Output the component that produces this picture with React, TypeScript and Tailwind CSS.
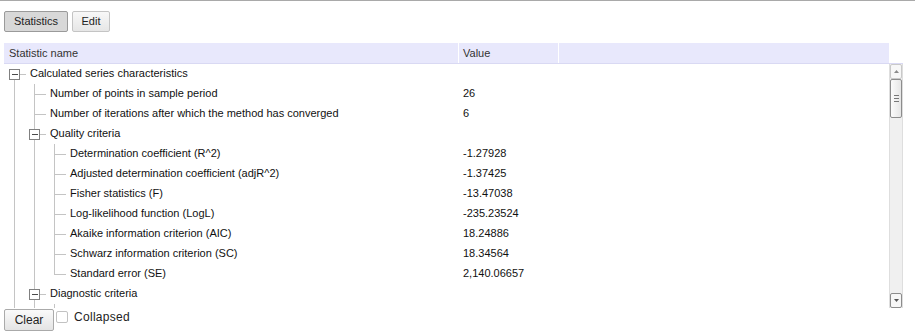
import React from 'react';

type Row = {
  guides: boolean[];
  box: boolean;
  top: boolean;
  bottom: boolean;
  name: string;
  value: string;
};

const rows: Row[] = [
  { guides: [], box: true, top: false, bottom: true, name: 'Calculated series characteristics', value: '' },
  { guides: [true], box: false, top: true, bottom: true, name: 'Number of points in sample period', value: '26' },
  { guides: [true], box: false, top: true, bottom: true, name: 'Number of iterations after which the method has converged', value: '6' },
  { guides: [true], box: true, top: true, bottom: true, name: 'Quality criteria', value: '' },
  { guides: [true, true], box: false, top: true, bottom: true, name: 'Determination coefficient (R^2)', value: '-1.27928' },
  { guides: [true, true], box: false, top: true, bottom: true, name: 'Adjusted determination coefficient (adjR^2)', value: '-1.37425' },
  { guides: [true, true], box: false, top: true, bottom: true, name: 'Fisher statistics (F)', value: '-13.47038' },
  { guides: [true, true], box: false, top: true, bottom: true, name: 'Log-likelihood function (LogL)', value: '-235.23524' },
  { guides: [true, true], box: false, top: true, bottom: true, name: 'Akaike information criterion (AIC)', value: '18.24886' },
  { guides: [true, true], box: false, top: true, bottom: true, name: 'Schwarz information criterion (SC)', value: '18.34564' },
  { guides: [true, true], box: false, top: true, bottom: false, name: 'Standard error (SE)', value: '2,140.06657' },
  { guides: [true], box: true, top: true, bottom: true, name: 'Diagnostic criteria', value: '' },
  // next row is scrolled below the fold: only its tree lines peek out
  { guides: [true, true], box: false, top: true, bottom: true, name: '', value: '' },
];

const LINE = '#c4c4c4';

function Guide({ on }: { on: boolean }) {
  return (
    <svg width="20" height="20" className="shrink-0" shapeRendering="crispEdges">
      {on && <line x1="10.5" y1="0" x2="10.5" y2="20" stroke={LINE} />}
    </svg>
  );
}

function Node({ box, top, bottom }: { box: boolean; top: boolean; bottom: boolean }) {
  return (
    <svg width="22" height="20" className="shrink-0" shapeRendering="crispEdges">
      {top && <line x1="10.5" y1="0" x2="10.5" y2={box ? 5 : 10.5} stroke={LINE} />}
      {bottom && <line x1="10.5" y1={box ? 16 : 10.5} x2="10.5" y2="20" stroke={LINE} />}
      <line x1={box ? 16 : 10.5} y1="10.5" x2="22" y2="10.5" stroke={LINE} />
      {box && (
        <>
          <rect x="5.5" y="5.5" width="10" height="10" fill="#fff" stroke="#808080" />
          <line x1="8" y1="10.5" x2="14" y2="10.5" stroke="#4a4a4a" />
        </>
      )}
    </svg>
  );
}

function Scrollbar() {
  return (
    <div className="flex h-[244px] w-[14px] flex-col bg-[#f0f0f0] border-x border-[#dedede]">
      <div className="flex h-[15px] items-center justify-center rounded-[2px] border border-[#c9c9c9] bg-[#f7f7f7]">
        <svg width="5" height="3"><polygon points="0,3 5,3 2.5,0" fill="#8a8a8a" /></svg>
      </div>
      <div className="flex h-[39px] flex-col items-center justify-center gap-[2px] rounded-[2px] border border-[#8c8c8c] bg-gradient-to-r from-[#fbfbfb] to-[#e6e6e6]">
        <div className="h-px w-[5px] bg-[#777]" />
        <div className="h-px w-[5px] bg-[#777]" />
        <div className="h-px w-[5px] bg-[#777]" />
      </div>
      <div className="flex-1" />
      <div className="flex h-[15px] items-center justify-center rounded-[2px] border border-[#8c8c8c] bg-[#f7f7f7]">
        <svg width="5" height="3"><polygon points="0,0 5,0 2.5,3" fill="#555" /></svg>
      </div>
    </div>
  );
}

export default function App() {
  const font = { fontFamily: '"Liberation Sans", Arial, sans-serif' };
  return (
    <div className="min-h-[331px] w-[915px] border-t border-[#a9a9a9] bg-white px-[4px]" style={font}>
      <div className="mt-[10px] flex gap-[4px]">
        <button
          type="button"
          className="h-[21px] w-[64px] rounded-[2px] border border-[#9a9a9a] bg-[#d8d8d8] text-[11px] text-[#222]"
        >
          Statistics
        </button>
        <button
          type="button"
          className="h-[21px] w-[38px] rounded-[2px] border border-[#c4c4c4] bg-gradient-to-b from-[#f8f8f8] to-[#e6e6e6] text-[11px] text-[#222]"
        >
          Edit
        </button>
      </div>

      <div className="mt-[11px] w-[899px]">
        <div className="flex border-b border-[#d9d9f3]">
          <div className="flex h-[20px] w-[885px] bg-[#e8e8fc] text-[11px] leading-[20px] text-[#333]">
            <div className="w-[455px] border-r border-white pl-[5px]">Statistic name</div>
            <div className="w-[100px] border-r border-white pl-[4px]">Value</div>
          </div>
        </div>

        <div className="flex">
          <div className="h-[244px] w-[885px] overflow-hidden text-[11px] leading-[18px] text-[#111]">
            {rows.map((r, i) => (
              <div key={i} className="flex h-[20px]">
                <div className="flex w-[455px] shrink-0">
                  {r.guides.map((g, j) => (
                    <Guide key={j} on={g} />
                  ))}
                  <Node box={r.box} top={r.top} bottom={r.bottom} />
                  <span className="pl-[4px] whitespace-nowrap">{r.name}</span>
                </div>
                <div className="pl-[4px]">{r.value}</div>
              </div>
            ))}
          </div>
          <Scrollbar />
        </div>
      </div>

      <div className="mt-[1px] flex items-start gap-[2px]">
        <button
          type="button"
          className="h-[22px] w-[50px] rounded-[2px] border border-[#aaa] bg-gradient-to-b from-[#fafafa] to-[#e4e4e4] text-[12px] text-[#222]"
        >
          Clear
        </button>
        <label className="flex items-center gap-[6px] text-[12px] leading-[16px] tracking-[0.3px] text-[#222]">
          <span className="block h-[12px] w-[12px] rounded-[2px] border border-[#c2c2c2] bg-white" />
          Collapsed
        </label>
      </div>
    </div>
  );
}
